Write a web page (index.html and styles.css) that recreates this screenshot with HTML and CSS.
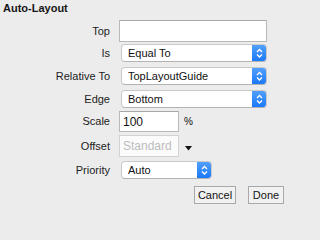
FILE: index.html
```html
<!DOCTYPE html>
<html>
<head>
<meta charset="utf-8">
<link rel="stylesheet" href="styles.css">
</head>
<body>
<div class="panel">
  <div class="title">Auto-Layout</div>
  <div class="form">
    <div class="row row-top">
      <span class="label">Top</span>
      <div class="field field-wide"></div>
    </div>
    <div class="row row-is">
      <span class="label">Is</span>
      <div class="popup popup-wide"><span class="popup-text">Equal To</span><span class="stepper"><svg width="15" height="18" viewBox="0 0 15 18"><path d="M5 8 L7.5 5.5 L10 8 M5 10.5 L7.5 13 L10 10.5" fill="none" stroke="#fff" stroke-width="1.3"/></svg></span></div>
    </div>
    <div class="row row-gap5">
      <span class="label">Relative To</span>
      <div class="popup popup-wide"><span class="popup-text">TopLayoutGuide</span><span class="stepper"><svg width="15" height="18" viewBox="0 0 15 18"><path d="M5 8 L7.5 5.5 L10 8 M5 10.5 L7.5 13 L10 10.5" fill="none" stroke="#fff" stroke-width="1.3"/></svg></span></div>
    </div>
    <div class="row row-gap5">
      <span class="label">Edge</span>
      <div class="popup popup-wide"><span class="popup-text">Bottom</span><span class="stepper"><svg width="15" height="18" viewBox="0 0 15 18"><path d="M5 8 L7.5 5.5 L10 8 M5 10.5 L7.5 13 L10 10.5" fill="none" stroke="#fff" stroke-width="1.3"/></svg></span></div>
    </div>
    <div class="row row-scale">
      <span class="label">Scale</span>
      <div class="inline">
        <div class="field field-small field-scale"><span class="value">100</span></div>
        <span class="unit">%</span>
      </div>
    </div>
    <div class="row row-offset">
      <span class="label">Offset</span>
      <div class="inline">
        <div class="field field-small field-offset"><span class="placeholder">Standard</span></div>
        <svg class="caret" width="7" height="5" viewBox="0 0 7 5"><polygon points="0,0 7,0 3.5,4.5" fill="#111"/></svg>
      </div>
    </div>
    <div class="row row-priority">
      <span class="label">Priority</span>
      <div class="popup popup-narrow"><span class="popup-text">Auto</span><span class="stepper"><svg width="15" height="18" viewBox="0 0 15 18"><path d="M5 8 L7.5 5.5 L10 8 M5 10.5 L7.5 13 L10 10.5" fill="none" stroke="#fff" stroke-width="1.3"/></svg></span></div>
    </div>
  </div>
  <div class="actions">
    <button class="btn btn-cancel">Cancel</button>
    <button class="btn btn-done">Done</button>
  </div>
</div>
</body>
</html>
```
FILE: styles.css
```css
html, body {
  margin: 0;
  padding: 0;
}
body {
  width: 290px;
  height: 213px;
  background: #ececec;
  font-family: "Liberation Sans", Arial, sans-serif;
  font-size: 11px;
  color: #1c1c1c;
  overflow: hidden;
}
.panel {
  display: flex;
  flex-direction: column;
}
.title {
  font-weight: bold;
  font-size: 11px;
  line-height: 13px;
  padding: 2px 0 0 3px;
  color: #161616;
}
.form {
  display: flex;
  flex-direction: column;
  margin-top: 5px;
}
.row {
  display: grid;
  grid-template-columns: 110px auto;
  column-gap: 9px;
  align-items: center;
}
.label {
  text-align: right;
  line-height: 13px;
  white-space: nowrap;
}
.row-top .label { padding-top: 1px; }
.row-is { margin-top: 2px; }
.row-gap5 { margin-top: 5px; }
.row-scale { margin-top: 3px; }
.row-offset { margin-top: 3px; }
.row-priority { margin-top: 4px; }

.field {
  box-sizing: border-box;
  background: #fff;
  border: 1px solid #b9b9b9;
  border-top-color: #a8a8a8;
  height: 22px;
  display: flex;
  align-items: center;
  padding-left: 3px;
  font-size: 12px;
}
.field-wide { width: 148px; }
.field-small { width: 60px; }
.field-scale { height: 21px; }
.field-offset { height: 22px; background: #fbfbfb; border-color: #d2d2d2; }
.value { color: #111; }
.placeholder { color: #bdbdbd; }

.inline {
  display: flex;
  align-items: center;
}
.unit {
  margin-left: 5px;
  font-size: 10px;
  color: #111;
}
.caret {
  margin-left: 6px;
  margin-top: 4px;
}

.popup {
  box-sizing: border-box;
  height: 18px;
  margin-left: 2px;
  display: flex;
  align-items: stretch;
  background: #fff;
  border: 1px solid #c9c9c9;
  border-bottom-color: #b3b3b3;
  border-radius: 4px;
  overflow: hidden;
}
.popup-wide { width: 146px; }
.popup-narrow { width: 91px; }
.popup-text {
  flex: 1;
  padding-left: 6px;
  line-height: 16px;
  color: #111;
  white-space: nowrap;
  overflow: hidden;
}
.stepper {
  width: 15px;
  margin: -1px -1px -1px 0;
  display: flex;
  align-items: center;
  justify-content: center;
  background: linear-gradient(#55a2fd, #1877f6);
  border-radius: 0 4px 4px 0;
}

.actions {
  display: flex;
  justify-content: flex-end;
  gap: 12px;
  margin-top: 7px;
  padding-right: 6px;
}
.btn {
  box-sizing: border-box;
  height: 18px;
  padding: 0;
  margin: 0;
  font-family: "Liberation Sans", Arial, sans-serif;
  font-size: 11px;
  color: #111;
  background: #f1f1f1;
  border: 1px solid #a9a9a9;
  border-radius: 0;
  line-height: 16px;
}
.btn-cancel { width: 42px; }
.btn-done { width: 36px; }
```
